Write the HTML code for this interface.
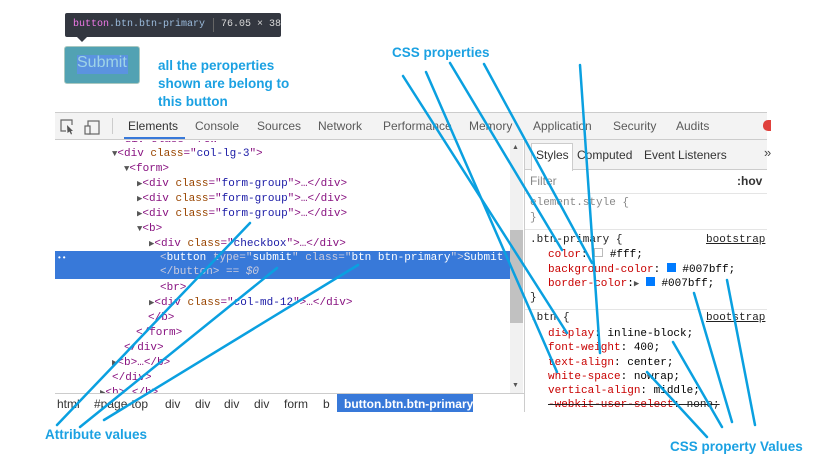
<!DOCTYPE html>
<html><head><meta charset="utf-8"><style>
*{margin:0;padding:0;box-sizing:border-box}
body{width:819px;height:460px;background:#fff;position:relative;overflow:hidden;font-family:"Liberation Sans",sans-serif}
.a{position:absolute;white-space:pre}
.m{font-family:"Liberation Mono",monospace;font-size:11px;line-height:15px}
.t{color:#881280}.n{color:#994500}.v{color:#1a1aa6}.p{color:#c80000}.k{color:#222}
.tri{color:#555;font-size:9px}
.lbl{color:#1ba1e2;font-weight:bold;font-size:13.5px}
</style></head><body>
<div class="a" style="left:65px;top:13px;width:216px;height:24px;background:#333740;border-radius:2px"></div>
<div class="a" style="left:76px;top:36px;width:0;height:0;border-left:6px solid transparent;border-right:6px solid transparent;border-top:6px solid #333740"></div>
<div class="a m" style="left:73px;top:17px;font-size:10px"><span style="color:#ee78e6">button</span><span style="color:#9bbbdc">.btn.btn-primary</span></div>
<div class="a" style="left:213px;top:18px;width:1px;height:14px;background:#666"></div>
<div class="a m" style="left:221px;top:17px;color:#d9d9d9;font-size:10px">76.05 × 38</div>
<div class="a" style="left:64px;top:46px;width:76px;height:38px;background:#52a2b3;border:1px solid #a9c8c0;border-radius:3px"></div>
<div class="a" style="left:77px;top:55px;height:19px;width:51px;background:#5b93e0"></div>
<div class="a" style="left:77px;top:54px;font-size:16px;color:#9fd4e6">Submit</div>
<div class="a lbl" style="left:158px;top:57px;line-height:18px">all the peroperties
shown are belong to
this button</div>
<div class="a lbl" style="left:392px;top:45px">CSS properties</div>
<div class="a" style="left:55px;top:112px;width:712px;height:28px;background:#f3f3f3;border-top:1px solid #ccc;border-bottom:1px solid #ccc"></div>
<svg class="a" style="left:58px;top:118px" width="50" height="18"><path d="M8 13H3V2h11v5" fill="none" stroke="#666" stroke-width="1.2"/><path d="M9 7l6 6-2 0 1 3-1 .5-1.5-3-2 1.5z" fill="#555"/><rect x="30" y="3" width="11" height="13" fill="none" stroke="#666" stroke-width="1.2"/><rect x="27" y="8" width="5" height="8" fill="#f3f3f3" stroke="#666" stroke-width="1.2"/></svg>
<div class="a" style="left:112px;top:118px;width:1px;height:16px;background:#ccc"></div>
<div class="a" style="left:128px;top:119px;font-size:12px;color:#333">Elements</div>
<div class="a" style="left:124px;top:137px;width:61px;height:2px;background:#3879d9"></div>
<div class="a" style="left:195px;top:119px;font-size:12px;color:#5a5a5a">Console</div>
<div class="a" style="left:257px;top:119px;font-size:12px;color:#5a5a5a">Sources</div>
<div class="a" style="left:318px;top:119px;font-size:12px;color:#5a5a5a">Network</div>
<div class="a" style="left:383px;top:119px;font-size:12px;color:#5a5a5a">Performance</div>
<div class="a" style="left:469px;top:119px;font-size:12px;color:#5a5a5a">Memory</div>
<div class="a" style="left:533px;top:119px;font-size:12px;color:#5a5a5a">Application</div>
<div class="a" style="left:613px;top:119px;font-size:12px;color:#5a5a5a">Security</div>
<div class="a" style="left:676px;top:119px;font-size:12px;color:#5a5a5a">Audits</div>
<div class="a" style="left:763px;top:120px;width:8px;height:11px;background:#e0413c;border-radius:5px 0 0 5px"></div>
<div class="a m" style="left:118px;top:133px;color:#881280;clip-path:inset(8px 0 0 0)">&lt;div class="row"&gt;</div>
<div class="a" style="left:55px;top:251px;width:455px;height:28px;background:#3879d9"></div>
<div class="a m" style="left:57px;top:251px;color:#fff;font-size:8px">••</div>
<div class="a m" style="left:112px;top:147px"><span class="tri">▼</span><span class="t">&lt;div </span><span class="n">class</span><span class="t">="</span><span class="v">col-lg-3</span><span class="t">"&gt;</span></div>
<div class="a m" style="left:124px;top:162px"><span class="tri">▼</span><span class="t">&lt;form&gt;</span></div>
<div class="a m" style="left:137px;top:177px"><span class="tri">▶</span><span class="t">&lt;div </span><span class="n">class</span><span class="t">="</span><span class="v">form-group</span><span class="t">"&gt;…&lt;/div&gt;</span></div>
<div class="a m" style="left:137px;top:192px"><span class="tri">▶</span><span class="t">&lt;div </span><span class="n">class</span><span class="t">="</span><span class="v">form-group</span><span class="t">"&gt;…&lt;/div&gt;</span></div>
<div class="a m" style="left:137px;top:207px"><span class="tri">▶</span><span class="t">&lt;div </span><span class="n">class</span><span class="t">="</span><span class="v">form-group</span><span class="t">"&gt;…&lt;/div&gt;</span></div>
<div class="a m" style="left:137px;top:222px"><span class="tri">▼</span><span class="t">&lt;b&gt;</span></div>
<div class="a m" style="left:149px;top:237px"><span class="tri">▶</span><span class="t">&lt;div </span><span class="n">class</span><span class="t">="</span><span class="v">checkbox</span><span class="t">"&gt;…&lt;/div&gt;</span></div>
<div class="a m" style="left:160px;top:251px;color:#fff"><span style="color:#ccd">&lt;</span>button <span style="color:#ccd">type="</span>submit<span style="color:#ccd">" class="</span>btn btn-primary<span style="color:#ccd">"&gt;</span>Submit</div>
<div class="a m" style="left:160px;top:265px;color:#ccd">&lt;/button&gt; == <i>$0</i></div>
<div class="a m t" style="left:160px;top:281px">&lt;br&gt;</div>
<div class="a m" style="left:149px;top:296px"><span class="tri">▶</span><span class="t">&lt;div </span><span class="n">class</span><span class="t">="</span><span class="v">col-md-12</span><span class="t">"&gt;…&lt;/div&gt;</span></div>
<div class="a m t" style="left:148px;top:311px">&lt;/b&gt;</div>
<div class="a m t" style="left:136px;top:326px">&lt;/form&gt;</div>
<div class="a m t" style="left:124px;top:341px">&lt;/div&gt;</div>
<div class="a m" style="left:112px;top:356px"><span class="tri">▶</span><span class="t">&lt;b&gt;…&lt;/b&gt;</span></div>
<div class="a m t" style="left:112px;top:371px">&lt;/div&gt;</div>
<div class="a m" style="left:100px;top:386px;clip-path:inset(0 0 8px 0)"><span class="tri">▶</span><span class="t">&lt;b&gt;…&lt;/b&gt;</span></div>
<div class="a" style="left:510px;top:140px;width:13px;height:253px;background:#f1f1f1"></div>
<div class="a" style="left:510px;top:230px;width:13px;height:93px;background:#c1c1c1"></div>
<div class="a" style="left:512px;top:144px;font-size:7px;color:#555">▲</div>
<div class="a" style="left:512px;top:382px;font-size:7px;color:#555">▼</div>
<div class="a" style="left:524px;top:140px;width:1px;height:272px;background:#ccc"></div>
<div class="a" style="left:55px;top:393px;width:469px;height:1px;background:#ccc"></div>
<div class="a" style="left:337px;top:394px;width:136px;height:18px;background:#3879d9"></div>
<div class="a" style="left:57px;top:397px;font-size:12px;color:#333">html</div>
<div class="a" style="left:94px;top:397px;font-size:12px;color:#333">#page-top</div>
<div class="a" style="left:165px;top:397px;font-size:12px;color:#333">div</div>
<div class="a" style="left:195px;top:397px;font-size:12px;color:#333">div</div>
<div class="a" style="left:224px;top:397px;font-size:12px;color:#333">div</div>
<div class="a" style="left:254px;top:397px;font-size:12px;color:#333">div</div>
<div class="a" style="left:284px;top:397px;font-size:12px;color:#333">form</div>
<div class="a" style="left:323px;top:397px;font-size:12px;color:#333">b</div>
<div class="a" style="left:344px;top:397px;font-size:12px;color:#fff;font-weight:bold">button.btn.btn-primary</div>
<div class="a" style="left:525px;top:140px;width:242px;height:30px;background:#f3f3f3;border-bottom:1px solid #ccc"></div>
<div class="a" style="left:531px;top:143px;width:42px;height:28px;background:#fff;border:1px solid #ccc;border-bottom:none"></div>
<div class="a" style="left:536px;top:148px;font-size:12px;color:#333">Styles</div>
<div class="a" style="left:577px;top:148px;font-size:12px;color:#333">Computed</div>
<div class="a" style="left:644px;top:148px;font-size:12px;color:#333">Event Listeners</div>
<div class="a" style="left:764px;top:145px;font-size:13px;color:#444">»</div>
<div class="a" style="left:530px;top:174px;font-size:12px;color:#888">Filter</div>
<div class="a" style="left:737px;top:174px;font-size:12px;color:#333;font-weight:bold">:hov</div>
<div class="a" style="left:525px;top:193px;width:242px;height:1px;background:#e5e5e5"></div>
<div class="a m" style="left:530px;top:196px;color:#888">element.style {
}</div>
<div class="a" style="left:525px;top:229px;width:242px;height:1px;background:#e5e5e5"></div>
<div class="a m k" style="left:530px;top:233px">.btn-primary {</div>
<div class="a m" style="left:706px;top:233px;color:#222;text-decoration:underline">bootstrap</div>
<div class="a m" style="left:548px;top:248px"><span class="p">color</span>: <span style="display:inline-block;width:9px;height:9px;border:1px solid #bbb;background:#fff"></span> #fff;</div>
<div class="a m" style="left:548px;top:263px"><span class="p">background-color</span>: <span style="display:inline-block;width:9px;height:9px;background:#007bff"></span> #007bff;</div>
<div class="a m" style="left:548px;top:277px"><span class="p">border-color</span>:<span class="tri">▶</span> <span style="display:inline-block;width:9px;height:9px;background:#007bff"></span> #007bff;</div>
<div class="a m k" style="left:530px;top:291px">}</div>
<div class="a" style="left:525px;top:309px;width:242px;height:1px;background:#e5e5e5"></div>
<div class="a m k" style="left:530px;top:311px">.btn {</div>
<div class="a m" style="left:706px;top:311px;color:#222;text-decoration:underline">bootstrap</div>
<div class="a m" style="left:548px;top:327px"><span class="p">display</span>: inline-block;</div>
<div class="a m" style="left:548px;top:341px"><span class="p">font-weight</span>: 400;</div>
<div class="a m" style="left:548px;top:356px"><span class="p">text-align</span>: center;</div>
<div class="a m" style="left:548px;top:370px"><span class="p">white-space</span>: nowrap;</div>
<div class="a m" style="left:548px;top:384px"><span class="p">vertical-align</span>: middle;</div>
<div class="a m" style="left:548px;top:398px;text-decoration:line-through;color:#222"><span class="p">-webkit-user-select</span>: none;</div>
<div class="a lbl" style="left:45px;top:427px">Attribute values</div>
<div class="a lbl" style="left:670px;top:439px">CSS property Values</div>
<svg class="a" style="left:0;top:0" width="819" height="460"><g stroke="#0aa0e0" stroke-width="2.5" fill="none" stroke-linecap="round">
<line x1="403" y1="76" x2="567" y2="333"/><line x1="426" y1="72" x2="557" y2="372"/><line x1="450" y1="63" x2="562" y2="250"/><line x1="484" y1="64" x2="592" y2="263"/><line x1="580" y1="65" x2="600" y2="353"/>
<line x1="647" y1="372" x2="707" y2="437"/><line x1="673" y1="342" x2="722" y2="427"/><line x1="694" y1="293" x2="732" y2="422"/><line x1="727" y1="280" x2="755" y2="425"/>
<line x1="250" y1="223" x2="57" y2="425"/><line x1="277" y1="268" x2="80" y2="427"/><line x1="358" y1="265" x2="104" y2="420"/>
</g></svg>
</body></html>
